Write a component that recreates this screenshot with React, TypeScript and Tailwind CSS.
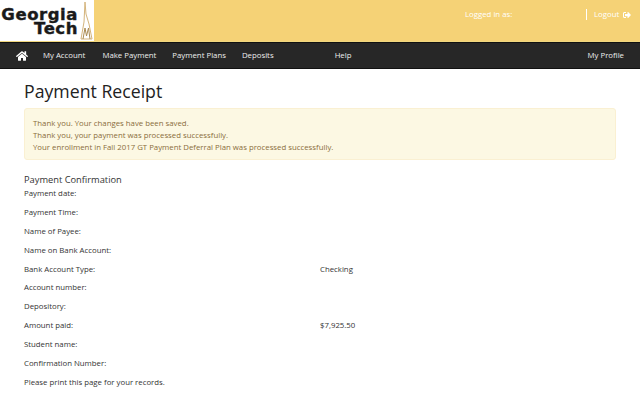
import { FaHome, FaSignOutAlt } from "react-icons/fa";

const fields = [
  { label: "Payment date:", value: "" },
  { label: "Payment Time:", value: "" },
  { label: "Name of Payee:", value: "" },
  { label: "Name on Bank Account:", value: "" },
  { label: "Bank Account Type:", value: "Checking" },
  { label: "Account number:", value: "" },
  { label: "Depository:", value: "" },
  { label: "Amount paid:", value: "$7,925.50" },
  { label: "Student name:", value: "" },
  { label: "Confirmation Number:", value: "" },
];

function Logo() {
  return (
    <div className="flex h-[41px] w-[94px] shrink-0 bg-white">
      <div className="w-[78px] whitespace-nowrap pt-[8px] text-right font-['DejaVu_Sans',sans-serif] text-[16.5px] font-bold leading-[14px] tracking-[0.55px] text-[#1a1a1a] [-webkit-text-stroke:0.4px_#1a1a1a]">
        <div>Georgia</div>
        <div>Tech</div>
      </div>
      <svg width="15" height="41" viewBox="0 0 15 41" className="ml-[1px] shrink-0">
        <path d="M6 2 L5 22 L2 39 L13 39 L10 24 L7 14 Z" fill="none" stroke="#d4b47c" strokeWidth="1" />
        <path d="M4 39 L6 28 L7.5 36 L9.5 28 L11 39" fill="none" stroke="#a98a54" strokeWidth="1" />
      </svg>
    </div>
  );
}

export default function App() {
  return (
    <div className="h-[403px] w-[640px] overflow-hidden bg-white font-['Open_Sans',sans-serif] text-[#333]">
      {/* Gold header */}
      <div className="flex h-[42px] border-b border-[#f0d77f] bg-[#f5d276]">
        <Logo />
        <div className="flex flex-1 items-start whitespace-nowrap pt-[8px] text-[7.8px] leading-[13px] text-white">
          <span className="ml-[371px] w-[121px]">Logged in as:</span>
          <span className="flex h-[13px] items-center">
            <span className="mr-[7px] h-[11px] w-px bg-white" />
            Logout
            <FaSignOutAlt className="ml-[4px] text-[8px]" />
          </span>
        </div>
      </div>

      {/* Nav */}
      <div className="flex h-[27px] items-center whitespace-nowrap border-y border-y-[#111] bg-[#272727] text-[7.8px] text-[#eee]">
        <FaHome className="ml-[16px] text-[12px] text-white" />
        <span className="ml-[15px]">My Account</span>
        <span className="ml-[17px]">Make Payment</span>
        <span className="ml-[16px]">Payment Plans</span>
        <span className="ml-[16px]">Deposits</span>
        <span className="ml-[61px]">Help</span>
        <span className="ml-auto mr-[16px]">My Profile</span>
      </div>

      {/* Content */}
      <div className="px-[24px]">
        <h1 className="mt-[8px] text-[17.7px] font-normal leading-[28px] text-[#222]">Payment Receipt</h1>
        <div className="mt-[3px] h-[52px] w-[592px] rounded-[3px] border border-[#faf0d2] bg-[#fcf8e3] px-[8px] pt-[8px] text-[7.8px] leading-[12px] text-[#8a6d3b]">
          <div>Thank you. Your changes have been saved.</div>
          <div>Thank you, your payment was processed successfully.</div>
          <div>Your enrollment in Fall 2017 GT Payment Deferral Plan was processed successfully.</div>
        </div>
        <h2 className="mt-[13px] text-[9.3px] font-normal leading-[14px]">Payment Confirmation</h2>
        <div className="flex flex-col text-[7.8px] leading-[13px]">
          {fields.map((f) => (
            <div key={f.label} className="flex h-[18.9px]">
              <span className="w-[296px]">{f.label}</span>
              <span>{f.value}</span>
            </div>
          ))}
          <div>Please print this page for your records.</div>
        </div>
      </div>
    </div>
  );
}
